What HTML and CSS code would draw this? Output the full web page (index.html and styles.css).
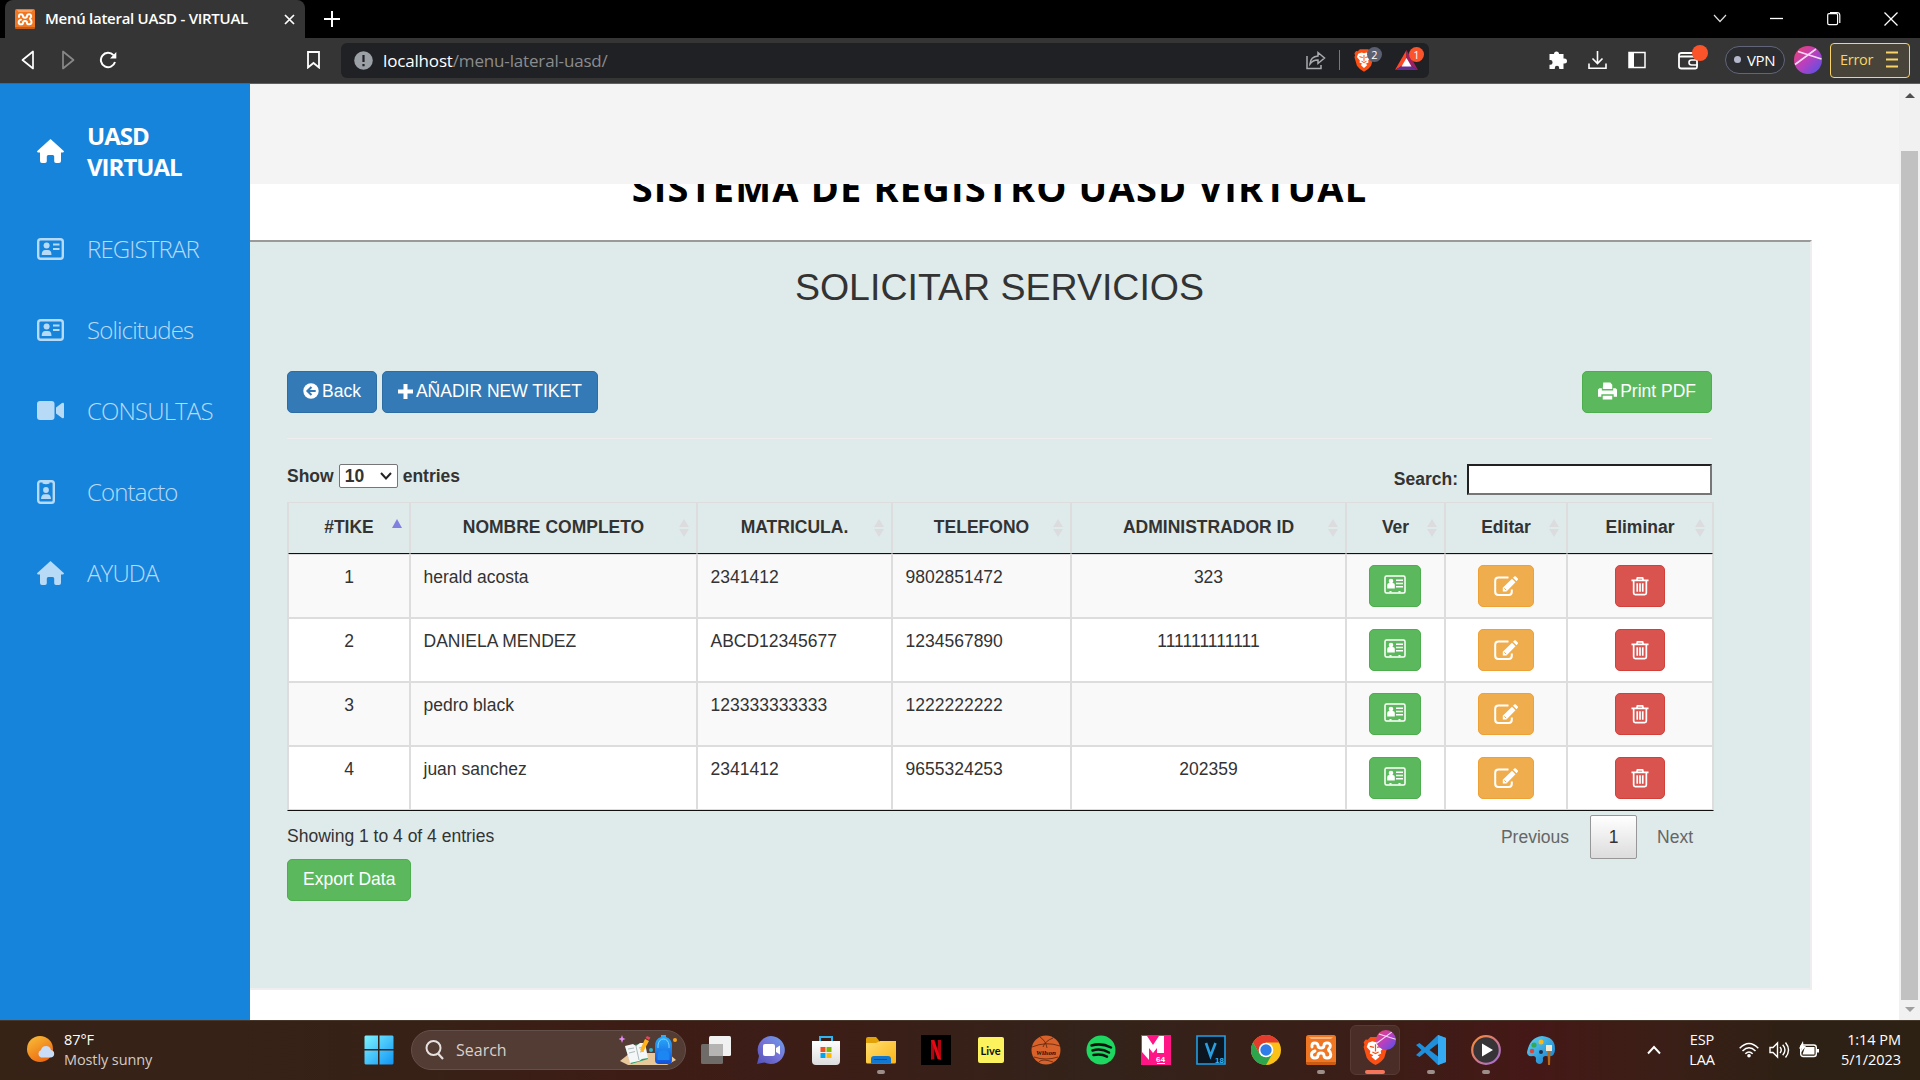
FILE: index.html
```html
<!DOCTYPE html>
<html lang="es">
<head>
<meta charset="utf-8">
<title>Menú lateral UASD - VIRTUAL</title>
<link rel="stylesheet" href="styles.css">
</head>
<body>
<svg class="defs" width="0" height="0">
  <defs>
    <linearGradient id="gSun" x1="0" y1="0" x2=".6" y2="1"><stop offset="0" stop-color="#f8c13a"/><stop offset="1" stop-color="#ee6a10"/></linearGradient>
    <linearGradient id="gWin" x1="0" y1="0" x2="1" y2="1"><stop offset="0" stop-color="#7df3ff"/><stop offset="1" stop-color="#1095f5"/></linearGradient>
    <linearGradient id="gAv" x1="0" y1="0" x2="1" y2="1"><stop offset="0" stop-color="#f0426c"/><stop offset=".5" stop-color="#b83fc0"/><stop offset="1" stop-color="#4a55ea"/></linearGradient>
    <linearGradient id="gChat" x1="1" y1="0" x2="0" y2="1"><stop offset="0" stop-color="#6aa2ec"/><stop offset=".5" stop-color="#7673d6"/><stop offset="1" stop-color="#5350b8"/></linearGradient>
    <linearGradient id="gFold" x1="0" y1="0" x2="1" y2="1"><stop offset="0" stop-color="#ffdf70"/><stop offset="1" stop-color="#fbb416"/></linearGradient>
    <linearGradient id="gBlue" x1="0" y1="0" x2="0" y2="1"><stop offset="0" stop-color="#2ab1ff"/><stop offset="1" stop-color="#1350d8"/></linearGradient>
    <linearGradient id="gRing" x1="0" y1="0" x2="1" y2="1"><stop offset="0" stop-color="#ff8a2a"/><stop offset="1" stop-color="#a06ae0"/></linearGradient>
    <linearGradient id="gPal" x1="0" y1="0" x2="1" y2="1"><stop offset="0" stop-color="#5fd6f4"/><stop offset="1" stop-color="#1579cc"/></linearGradient>
    <linearGradient id="gStore" x1="0" y1="0" x2="0" y2="1"><stop offset="0" stop-color="#fff"/><stop offset="1" stop-color="#dcdcdc"/></linearGradient>
  </defs>
  <symbol id="house" viewBox="0 0 27 24"><path d="M13.5 0 27 12.2Q26.8 13.4 25.6 13.4H24V22q0 2-2 2h-3q-1.8 0-1.8-1.8V17.500q0-1.500-1.500-1.500h-4.400q-1.500 0-1.500 1.500v4.700Q9.800 24 8 24H5q-2 0-2-2V13.400H1.400Q.2 13.400 0 12.200Z"/></symbol>
  <symbol id="card" viewBox="0 0 27 22"><rect x="1.200" y="1.200" width="24.600" height="19.600" rx="2.500" fill="none" stroke="currentColor" stroke-width="2.400"/><circle cx="9.600" cy="7.600" r="3"/><path d="M4.700 17q0-5 3.600-5h2.600q3.600 0 3.600 5z"/><path d="M16 5.500h6.500v2H16zM16 10h6.500v2H16z"/></symbol>
  <symbol id="video" viewBox="0 0 27 19"><rect width="17.500" height="19" rx="3"/><path d="M19 6.500 25 2q2-.8 2 1v13q0 1.800-2 1l-6-4.500z"/></symbol>
  <symbol id="badge" viewBox="0 0 18 24"><rect x="1.200" y="1.200" width="15.600" height="21.600" rx="2.300" fill="none" stroke="currentColor" stroke-width="2.400"/><path d="M5.500 0h7v3.500q-3.500 1.500-7 0z"/><circle cx="9" cy="10" r="2.900"/><path d="M4 19q.2-4.800 3.700-4.800h2.600q3.500 0 3.700 4.800z"/></symbol>
  <symbol id="contact" viewBox="0 0 22 19"><rect x="1" y="1" width="20" height="17" rx="1.500" fill="none" stroke="currentColor" stroke-width="1.500"/><circle cx="7" cy="6" r="2.300"/><path d="M3.200 13.500V10q0-2 2-2h3.600q2 0 2 2v3.500z"/><path d="M12 4.500h7v1.500h-7zM12 7.700h7v1.500h-7zM12 10.900h7v1.500h-7zM5.500 16h2v1.500h-2zM14.500 16h2v1.500h-2z"/></symbol>
  <symbol id="pencil" viewBox="0 0 24 21"><path d="M14.500 1.500H4.500q-3.300 0-3.300 3.300v11q0 3.300 3.300 3.300h10q3.300 0 3.300-3.300v-2.300" fill="none" stroke="currentColor" stroke-width="2"/><path d="m18 2.800 3.500 3.500-9 9.200H8.800v-3.700zM19 1.800 20.300.6q.8-.8 1.600 0l1.700 1.700q.8.800 0 1.600L22.500 5.300z"/><path d="m10.300 12.300 1.900 1.900" stroke="#f0ad4e"/></symbol>
  <symbol id="trash" viewBox="0 0 19 20"><path d="M.5 4h18M6 4l.8-2.600h5.400L13 4M2.800 4.500v12.800q0 1.700 1.700 1.700h10q1.700 0 1.700-1.700V4.500M6.600 7v9M9.500 7v9M12.400 7v9" fill="none" stroke="currentColor" stroke-width="1.800"/></symbol>
  <symbol id="brave" viewBox="0 0 24 28"><path d="M7 1h10l2.500 2.500 2-.2L23.500 6l-.8 2.500.8 2-3 10.500Q18 25 12 28 6 25 3.500 21L.5 10.500l.8-2L.5 6l2-2.700 2 .2z" fill="#fb4f14"/><path d="m12 6 3-1 4 1.500 1.500 4-3.500 4 .5 2.500-3.500 1.500 2 1.500-4 3.500L8 20l2-1.500L6.500 17l.5-2.500-3.500-4L5 6.500 9 5z" fill="#fff"/><path d="m6.500 10 4 1M17.500 10l-4 1M12 8v7M9 15.500l3 1.500 3-1.500" stroke="#fb4f14" stroke-width="1.200" fill="none"/></symbol>
  <symbol id="xampp" viewBox="0 0 30 30"><rect width="30" height="30" rx="2.500" fill="#ef7622"/><path d="M3 2h24l-2 2H5z" fill="#ffb27a"/><path d="M0 27v.5Q0 30 2.500 30h25q2.500 0 2.500-2.500V27z" fill="#c95c12"/><path d="M6 12V10.500Q6 8 8.800 8T12 10.500Q12 13 15 13t3-2.500Q18 8 21.200 8T24.300 11q0 1.500-1.300 2.500-1 1-.2 2 2 1.300 2 4 0 3.500-3.600 3.500-3.200 0-3.200-2.500 0-2.500-3-2.500t-3 2.500q0 2.500-3.200 2.500-3.300 0-3.300-3.300 0-2.700 3.500-3.700" fill="none" stroke="#fff" stroke-width="2.900" stroke-linecap="round" stroke-linejoin="round"/></symbol>
  <symbol id="avatar" viewBox="0 0 28 28"><circle cx="14" cy="14" r="14" fill="url(#gAv)"/><path d="M1 18.500 22 3M4 5.500 27.500 13" stroke="#f6d9f5" stroke-width="1.600"/></symbol>
</svg>

<header class="tabbar">
  <div class="tab">
    <svg class="favicon" width="20" height="20"><use href="#xampp"/></svg>
    <span class="tab-title">Menú lateral UASD - VIRTUAL</span>
    <svg class="tab-close" width="11" height="11" viewBox="0 0 11 11"><path d="m1 1 9 9M10 1l-9 9" stroke="#fff" stroke-width="1.700"/></svg>
  </div>
  <svg class="new-tab" width="16" height="16" viewBox="0 0 16 16"><path d="M8 0v16M0 8h16" stroke="#fff" stroke-width="2"/></svg>
  <div class="window-buttons">
    <svg width="14" height="38"><path d="m1 15 6 6.500 6-6.500" fill="none" stroke="#ddd" stroke-width="1.200"/></svg>
    <svg width="14" height="38"><path d="M0 18.500h13" stroke="#fff" stroke-width="1.300"/></svg>
    <svg width="14" height="38"><path d="M.7 15q0-1.300 1.300-1.300h7.300q1.300 0 1.300 1.300v8.300q0 1.300-1.300 1.300H2q-1.300 0-1.300-1.300zM3 12.500h7q2.800 0 2.800 2.800V23" fill="none" stroke="#fff" stroke-width="1.200"/></svg>
    <svg width="14" height="38"><path d="m.5 12.500 13 13M13.500 12.500l-13 13" stroke="#fff" stroke-width="1.300"/></svg>
  </div>
</header>

<nav class="toolbar">
  <div class="nav-icons">
    <svg width="14" height="20" viewBox="0 0 14 20"><path d="M12 1.500v17L1.500 10z" fill="none" stroke="#fff" stroke-width="1.700" stroke-linejoin="round"/></svg>
    <svg width="14" height="20" viewBox="0 0 14 20"><path d="M2 1.500v17L12.500 10z" fill="none" stroke="#888" stroke-width="1.700" stroke-linejoin="round"/></svg>
    <svg width="18" height="18" viewBox="0 0 18 18"><path d="M14.500 4.200A7.200 7.200 0 1 0 16 11" fill="none" stroke="#fff" stroke-width="2"/><path d="M17.300 1v6.500H11z" fill="#fff"/></svg>
  </div>
  <svg class="bookmark" width="13" height="18" viewBox="0 0 13 18"><path d="M1 1h11v15.500L6.500 12 1 16.500z" fill="none" stroke="#fff" stroke-width="1.800"/></svg>
  <div class="urlbar">
    <svg width="19" height="19" viewBox="0 0 19 19"><circle cx="9.500" cy="9.500" r="9.300" fill="#9aa0a6"/><path d="M9.500 4v7M9.500 13v2.300" stroke="#202124" stroke-width="2.200"/></svg>
    <span class="url"><b>localhost</b>/menu-lateral-uasd/</span>
    <div class="url-actions">
      <svg width="20" height="20" viewBox="0 0 20 20"><path d="M1 6v12.500h14V15M4 14q.5-7.500 8-8V2.500L18.500 8 12 13.500V10q-5-.2-8 4z" fill="none" stroke="#a9abae" stroke-width="1.500"/></svg>
      <i class="divider"></i>
      <span class="with-badge"><svg width="20" height="24"><use href="#brave"/></svg><em class="count gray">2</em></span>
      <span class="with-badge"><svg width="23" height="20" viewBox="0 0 23 20"><path d="M11.500 0 0 20l11.500-7z" fill="#ff4724"/><path d="M11.500 0 23 20l-11.500-7z" fill="#9e1f63"/><path d="M0 20h23l-11.500-7z" fill="#662d91"/><path d="m11.500 8 5 8.500h-10z" fill="#fff"/></svg><em class="count">1</em></span>
    </div>
  </div>
  <div class="extensions">
    <svg width="20" height="20" viewBox="0 0 20 20"><path fill="#fff" d="M6 4a2.500 2.500 0 0 1 5 0h4.500v4.500h1a2.500 2.500 0 0 1 0 5h-1V19h-4.300v-1a2.200 2.200 0 0 0-4.400 0v1H1.500v-4.300h.8a2.300 2.300 0 0 0 0-4.600h-.8V4z"/></svg>
    <svg class="dl" width="19" height="20" viewBox="0 0 19 20"><path d="M9.500 1v12M4.500 8.500l5 5 5-5M1 13.500v4.800h17v-4.800" fill="none" stroke="#fff" stroke-width="1.600"/></svg>
    <svg class="side" width="18" height="18" viewBox="0 0 18 18"><rect x="1" y="1.500" width="16" height="15" fill="none" stroke="#fff" stroke-width="1.500"/><path d="M1 1.500h5v15H1z" fill="#fff"/></svg>
    <span class="with-badge wallet"><svg width="21" height="20" viewBox="0 0 21 20"><path d="M17 6.500V3H3.500Q1 3 1 5t2.500 1.500H19V17q0 1.500-1.500 1.500h-14Q1 18.500 1 16.500V5" fill="none" stroke="#fff" stroke-width="1.800"/><path d="M20 10h-6.500a2.500 2.500 0 0 0 0 5H20" fill="none" stroke="#fff" stroke-width="1.600"/></svg><em class="dot"></em></span>
    <span class="vpn"><i></i>VPN</span>
    <svg class="profile" width="28" height="28"><use href="#avatar"/></svg>
    <span class="error">Error<svg width="12" height="17" viewBox="0 0 12 17"><path d="M0 1.500h12M0 8.500h12M0 15.500h12" stroke="#f9d367" stroke-width="1.800"/></svg></span>
  </div>
</nav>

<div class="viewport">
  <aside class="sidebar">
    <a class="item brand"><svg width="27" height="24"><use href="#house"/></svg><span>UASD VIRTUAL</span></a>
    <a class="item"><svg width="27" height="22"><use href="#card"/></svg><span>REGISTRAR</span></a>
    <a class="item"><svg width="27" height="22"><use href="#card"/></svg><span>Solicitudes</span></a>
    <a class="item"><svg width="27" height="19"><use href="#video"/></svg><span>CONSULTAS</span></a>
    <a class="item slim"><svg width="18" height="24"><use href="#badge"/></svg><span>Contacto</span></a>
    <a class="item"><svg width="27" height="24"><use href="#house"/></svg><span>AYUDA</span></a>
  </aside>
  <main class="main">
    <div class="topband"></div>
    <div class="headline"><h1>SISTEMA DE REGISTRO UASD VIRTUAL</h1></div>
    <section class="panel">
      <h2>SOLICITAR SERVICIOS</h2>
      <div class="actions">
        <a class="btn primary"><svg width="16" height="16" viewBox="0 0 17 17"><circle cx="8.500" cy="8.500" r="8.200" fill="#fff"/><path d="M13.500 8.500H5M9 4.200 4.700 8.500 9 12.800" fill="none" stroke="#337ab7" stroke-width="2.200"/></svg>Back</a>
        <a class="btn primary"><svg width="15" height="15" viewBox="0 0 15 15"><path d="M7.500 0v15M0 7.500h15" stroke="#fff" stroke-width="4"/></svg>AÑADIR NEW TIKET</a>
        <a class="btn success print"><svg width="19" height="18" viewBox="0 0 20 18"><path fill="#fff" d="M5.500 0h7.500L15 2.500V7H5zM0 7.500 1.500 6H4v2.500h12V6h2.500L20 7.500V15h-3.500v-2.500h-13V15H0zM5 14h10v4H5z"/></svg>Print PDF</a>
      </div>
      <hr>
      <div class="controls">
        <label>Show <span class="select">10<svg width="12" height="8" viewBox="0 0 12 8"><path d="m1 1 5 5.500L11 1" fill="none" stroke="#222" stroke-width="2"/></svg></span> entries</label>
        <label class="search">Search:<input type="text"></label>
      </div>
      <table>
        <colgroup><col class="c1"><col class="c2"><col class="c3"><col class="c4"><col class="c5"><col class="c6"><col class="c7"><col class="c8"></colgroup>
        <thead><tr><th class="sorted">#TIKE</th><th>NOMBRE COMPLETO</th><th>MATRICULA.</th><th>TELEFONO</th><th>ADMINISTRADOR ID</th><th>Ver</th><th>Editar</th><th>Eliminar</th></tr></thead>
        <tbody>
          <tr><td class="c">1</td><td>herald acosta</td><td>2341412</td><td>9802851472</td><td class="c">323</td><td class="c"><a class="btn success ver"><svg width="22" height="19"><use href="#contact"/></svg></a></td><td class="c"><a class="btn warning"><svg width="24" height="21"><use href="#pencil"/></svg></a></td><td class="c"><a class="btn danger"><svg width="18" height="20"><use href="#trash"/></svg></a></td></tr>
          <tr><td class="c">2</td><td>DANIELA MENDEZ</td><td>ABCD12345677</td><td>1234567890</td><td class="c">111111111111</td><td class="c"><a class="btn success ver"><svg width="22" height="19"><use href="#contact"/></svg></a></td><td class="c"><a class="btn warning"><svg width="24" height="21"><use href="#pencil"/></svg></a></td><td class="c"><a class="btn danger"><svg width="18" height="20"><use href="#trash"/></svg></a></td></tr>
          <tr><td class="c">3</td><td>pedro black</td><td>123333333333</td><td>1222222222</td><td class="c"></td><td class="c"><a class="btn success ver"><svg width="22" height="19"><use href="#contact"/></svg></a></td><td class="c"><a class="btn warning"><svg width="24" height="21"><use href="#pencil"/></svg></a></td><td class="c"><a class="btn danger"><svg width="18" height="20"><use href="#trash"/></svg></a></td></tr>
          <tr><td class="c">4</td><td>juan sanchez</td><td>2341412</td><td>9655324253</td><td class="c">202359</td><td class="c"><a class="btn success ver"><svg width="22" height="19"><use href="#contact"/></svg></a></td><td class="c"><a class="btn warning"><svg width="24" height="21"><use href="#pencil"/></svg></a></td><td class="c"><a class="btn danger"><svg width="18" height="20"><use href="#trash"/></svg></a></td></tr>
        </tbody>
      </table>
      <div class="footer">
        <div class="info"><p>Showing 1 to 4 of 4 entries</p><a class="btn success">Export Data</a></div>
        <div class="pager"><span>Previous</span><b>1</b><span>Next</span></div>
      </div>
    </section>
  </main>
  <div class="scrollbar"><i class="up"></i><div class="thumb"></div><i class="down"></i></div>
</div>

<footer class="taskbar">
  <div class="weather">
    <svg width="30" height="28" viewBox="0 0 30 28"><circle cx="13" cy="13" r="13" fill="url(#gSun)"/><path d="M14 21.500a4 4 0 0 1 0-7.500q1-4 5-4t5 4a3.800 3.800 0 0 1 0 7.500z" fill="#c9dcf8"/></svg>
    <div><p>87°F</p><p class="dim">Mostly sunny</p></div>
  </div>
  <svg class="start" width="30" height="30" viewBox="0 0 30 30"><path d="M1.500.5H14V14H.5V1.500zM15.500.5h13l1 1V14h-14zM.5 15.500H14v14H1.500l-1-1zM15.500 15.500h14v13l-1 1h-13z" fill="url(#gWin)"/></svg>
  <div class="searchbox">
    <svg width="19" height="20" viewBox="0 0 19 20"><circle cx="8.500" cy="8" r="7" fill="none" stroke="#e6e0de" stroke-width="2"/><path d="m13 13.500 5 5.500" stroke="#e6e0de" stroke-width="2.200"/></svg>
    <span>Search</span>
    <svg class="art" width="60" height="34" viewBox="0 0 60 34"><path d="m1 28 10-8h38l8 7-9 5H9z" fill="#e8c79a"/><path d="m6 14 18-4 5 16-17 5z" fill="#2f9e6a"/><path d="m6 13 8-2 3 2 4-3 5 0 3 15-6 1-3 2-9 2z" fill="#f4f6f8"/><path d="m17 13 3 14M9 16l6-1M10 20l6-1.500M20 15l4-1M21 19l4-1" stroke="#9aa" stroke-width=".8"/><path d="m21 17 5-11 4 2-6 11z" fill="#ffb21a"/><path d="m26.500 5 1.500-2 3.500 1.500L30 7z" fill="#f0405a"/><path d="M36 13q0-7 6-9V2h5v2q6 2 6 9v14q0 4-4 4h-9q-4 0-4-4z" fill="url(#gBlue)"/><path d="M38.500 27v-4q0-6 6-6t6 6v4z" fill="#1c86f2"/><path d="M39 15V12q1-6 5.500-6T50 12v3" stroke="#7cd4ff" fill="none"/><path d="m3 2 1 3L6.500 6 4 7 3 10 2 7-.500 6 2 5z" fill="#e58af5"/><circle cx="32" cy="17" r="2" fill="#35b5c8"/><circle cx="56" cy="7" r="2" fill="#f6a51a"/></svg>
  </div>
  <div class="apps">
    <span class="app"><svg width="30" height="30" viewBox="0 0 30 30"><rect x="0" y="9" width="22" height="20" rx="1.500" fill="#6f6b69"/><rect x="8" y="1" width="22" height="20" rx="1.500" fill="#f1f1f1"/><path d="M8 9h14v12H8z" fill="#b6b4b3"/></svg></span>
    <span class="app"><svg width="30" height="30" viewBox="0 0 30 30"><path d="M15 1a14 14 0 1 1-6.500 26.500L1 29l2-8A14 14 0 0 1 15 1z" fill="url(#gChat)"/><rect x="7" y="9" width="12" height="12" rx="2" fill="#fff"/><path d="m20 13 4-2.500v9L20 17z" fill="#fff"/></svg></span>
    <span class="app"><svg width="30" height="30" viewBox="0 0 30 30"><path d="M9 7V2h12v5" fill="none" stroke="#2fb4f0" stroke-width="2"/><path d="M1 6h28v20q0 4-4 4H5q-4 0-4-4z" fill="url(#gStore)"/><path d="M9.500 12h5v5h-5z" fill="#f25022"/><path d="M15.500 12h5v5h-5z" fill="#7fba00"/><path d="M9.500 18h5v5h-5z" fill="#00a4ef"/><path d="M15.500 18h5v5h-5z" fill="#ffb900"/></svg></span>
    <span class="app on"><svg width="30" height="30" viewBox="0 0 30 30"><path d="M0 4q0-2 2-2h8l3 3.500V12H0z" fill="#e0a208"/><path d="M0 8h10l4-2h16v21q0 1.500-1.500 1.500h-27Q0 28.500 0 27z" fill="url(#gFold)"/><path d="M5 28.500V24q0-3 3-3h14q3 0 3 3v4.500z" fill="#1277cf"/><path d="M8 24.500h13" stroke="#0a4c92"/></svg></span>
    <span class="app"><svg width="30" height="30" viewBox="0 0 30 30"><path d="M0 0h30v30H0z" fill="#000"/><path d="M10 5h3.300v19l-3.300.7zM16.700 5H20v19.700l-3.300-.7z" fill="#b1060f"/><path d="M10 5h3.300L20 24.700l-3.300-.7z" fill="#e50914"/></svg></span>
    <span class="app"><span class="live">Live</span></span>
    <span class="app"><svg width="30" height="30" viewBox="0 0 30 30"><circle cx="15" cy="15" r="14.500" fill="#d8622a"/><path d="M1 12q14-6 28-1M3 22q12 4 24 0M9 2q6 4 7 11M22 3q-8 3-10 9M8 27q3-4 14 0" fill="none" stroke="#5a230e" stroke-width=".8"/><text x="15" y="20" text-anchor="middle" class="wilson">Wilson</text></svg></span>
    <span class="app"><svg width="30" height="30" viewBox="0 0 30 30"><circle cx="15" cy="15" r="14.500" fill="#1ed760"/><path d="M5.500 10.500q10-3 19.500 2M6.500 15.500q9-2.500 16.500 2M7.500 20q7.500-1.800 13.500 1.700" fill="none" stroke="#111" stroke-width="2.500" stroke-linecap="round"/></svg></span>
    <span class="app"><svg width="30" height="30" viewBox="0 0 30 30"><path d="M0 0h30v30H0z" fill="#ff1585"/><path d="M1 1h5l6 9 6-9h5v17h-7v-5l-4 5-4-5v12L1 17z" fill="#fff"/><text x="19.500" y="26.500" class="m64">64</text><path d="M16 28.500h8" stroke="#fff"/></svg></span>
    <span class="app"><svg width="30" height="30" viewBox="0 0 30 30"><path d="M1 1h28v28H1z" fill="#0b1620" stroke="#1f9fe8" stroke-width="1.600"/><path d="m10 8 4.500 13L19.500 8" fill="none" stroke="#2a9fe0" stroke-width="2.600"/><text x="19" y="27.500" class="v18">18</text></svg></span>
    <span class="app"><svg width="30" height="30" viewBox="0 0 30 30"><circle cx="15" cy="15" r="15" fill="#fbc116"/><path d="M15 15 8.500 18.700 2 7.500A15 15 0 0 1 28 7.500H15z" fill="#e33b2e"/><path d="M2 7.500A15 15 0 0 0 15 30l6.500-11.300L15 22l-6.500-3.300z" fill="#2da44e"/><circle cx="15" cy="15" r="7.300" fill="#fff"/><circle cx="15" cy="15" r="5.700" fill="#2f7de9"/></svg></span>
    <span class="app on"><svg width="30" height="30"><use href="#xampp"/></svg></span>
    <span class="app active"><svg width="25" height="29"><use href="#brave"/></svg><svg class="mini" width="20" height="20"><use href="#avatar"/></svg></span>
    <span class="app on"><svg width="30" height="30" viewBox="0 0 30 30"><path d="m22 0 8 3v24l-8 3L9 17.500 3.500 22 0 20l5.500-5L0 10l3.500-2L9 12.500zM22 8.500 13.500 15l8.500 6.500z" fill="#1f8fdc"/><path d="m22 0 8 3v24l-8 3z" fill="#35a9f2"/></svg></span>
    <span class="app on"><svg width="30" height="30" viewBox="0 0 30 30"><circle cx="15" cy="15" r="13.800" fill="#363436" stroke="url(#gRing)" stroke-width="2.200"/><path d="m11 8.500 11 6.500-11 6.500z" fill="#fff"/></svg></span>
    <span class="app"><svg width="30" height="30" viewBox="0 0 30 30"><path d="M16 1q13 1 13 13 0 9-9 7-4 0-3 4 0 4-4 4-4-1-3-5 0-3-3-3-6 1-6-4Q4 2 16 1z" fill="url(#gPal)"/><circle cx="8" cy="10" r="2.600" fill="#35a853"/><circle cx="15" cy="7" r="2.500" fill="#f8b81e"/><circle cx="6" cy="16" r="2.300" fill="#d9483b"/><circle cx="15" cy="17" r="2" fill="#20304a"/><path d="M20 10h6v6h-6z" fill="#f3e6d0"/><path d="M21.500 16h3l-.5 14h-2z" fill="#b56a18"/></svg></span>
  </div>
  <div class="tray">
    <svg class="chev" width="14" height="10" viewBox="0 0 14 10"><path d="M1 8.500 7 2l6 6.500" fill="none" stroke="#fff" stroke-width="1.900"/></svg>
    <div class="lang"><p>ESP</p><p>LAA</p></div>
    <svg class="wifi" width="20" height="16" viewBox="0 0 20 16"><path d="M.7 6.200q9.300-9.500 18.600 0M3.500 9q6.500-6.500 13 0M6.300 11.700q3.700-3.500 7.400 0" fill="none" stroke="#fff" stroke-width="1.500"/><circle cx="10" cy="13.700" r="1.800" fill="#fff"/></svg>
    <svg class="vol" width="21" height="18" viewBox="0 0 21 18"><path d="M1 6.500h3L8.500 2v14L4 11.500H1zM11 6q2.500 3 0 6M13.700 3.800q4.500 5.200 0 10.400M16.500 1.500q6 7.500 0 15" fill="none" stroke="#fff" stroke-width="1.400"/></svg>
    <svg class="bat" width="20" height="18" viewBox="0 0 20 18"><rect x="1.700" y="4" width="15.600" height="11.500" rx="2.500" fill="none" stroke="#fff" stroke-width="1.400"/><path d="M6 6h9.500v7.500h-12zM18 8h2v3.500h-2zM4 0 0 7.500h2.500L1.500 12 7 5H4.500z" fill="#fff"/></svg>
    <div class="clock"><p>1:14 PM</p><p>5/1/2023</p></div>
  </div>
</footer>
</body>
</html>
```

FILE: styles.css
```css
* { box-sizing: border-box; }
body { margin: 0; width: 1920px; height: 1080px; overflow: hidden; font-family: "Open Sans", "Noto Sans", sans-serif; background: #fff; }
p, h1, h2 { margin: 0; }
svg { display: block; flex: none; fill: currentColor; }
.defs { position: absolute; }

/* browser chrome */
.tabbar { height: 38px; background: #000; display: flex; align-items: center; color: #fff; padding-left: 5px; }
.tab { width: 300px; height: 38px; background: #353535; border-radius: 8px 8px 0 0; display: flex; align-items: center; padding: 0 10px; }
.tab-title { margin-left: 10px; width: 229px; padding-bottom: 2px; font-size: 15px; font-weight: 600; letter-spacing: -.27px; white-space: nowrap; }
.tab-close { margin-left: 10px; }
.new-tab { margin-left: 19px; }
.window-buttons { display: flex; gap: 43px; margin-left: auto; padding-right: 22px; }
.toolbar { height: 46px; background: #353535; border-bottom: 1px solid #606060; display: flex; align-items: center; padding: 0 10px 1px 0; color: #fff; }
.nav-icons { display: flex; align-items: center; gap: 26px; padding-left: 21px; width: 307px; }
.nav-icons svg:last-child { margin-left: -2px; }
.bookmark { margin-right: 21px; }
.urlbar { width: 1088px; height: 35px; border-radius: 6px; background: #202124; display: flex; align-items: center; padding: 0 11px 0 13px; }
.url { margin-left: 10px; font-size: 17px; color: #8b8c8e; letter-spacing: -.16px; }
.url b { color: #fff; font-weight: 400; }
.url-actions { display: flex; align-items: center; margin-left: auto; }
.divider { width: 1px; height: 20px; background: #77787a; margin: 0 14px 0 13px; }
.with-badge { position: relative; display: block; }
.with-badge + .with-badge { margin-left: 21px; }
.count { position: absolute; left: 13px; top: -1px; width: 15px; height: 15px; border-radius: 8px; background: #5b5f72; font: 11px/15px "Open Sans", sans-serif; text-align: center; color: #fff; }
.with-badge + .with-badge .count { left: 14px; background: #fb542b; top: -3px; }
.extensions { display: flex; align-items: center; margin-left: auto; }
.dl { margin-left: 20px; }
.side { margin-left: 21px; }
.wallet { margin-left: 32px; }
.dot { position: absolute; left: 14px; top: -5px; width: 16px; height: 16px; border-radius: 50%; background: #fb542b; }
.vpn { margin-left: 26px; width: 60px; height: 28px; border: 1px solid #62657a; border-radius: 14px; display: flex; align-items: center; font-size: 15px; padding: 0 0 1px 8px; letter-spacing: -.4px; background: #2c2d31; }
.vpn i { width: 7px; height: 7px; border-radius: 50%; background: #b5b8cc; margin-right: 6px; }
.profile { margin-left: 9px; }
.error { margin-left: 8px; width: 80px; height: 35px; border: 1px solid #f9d367; border-radius: 4px; background: #48443a; color: #f9d367; font-size: 14.5px; letter-spacing: -.3px; display: flex; align-items: center; justify-content: space-between; padding: 0 11px 1px 9px; }

/* page */
.viewport { height: 936px; display: flex; }
.sidebar { width: 250px; background: #1784dc; padding-top: 13px; color: #b7daf6; }
.item { display: flex; align-items: center; height: 81px; padding-left: 37px; font-weight: 300; font-size: 24px; line-height: 31px; letter-spacing: -.85px; }
.item span { margin-left: 23px; width: 120px; }
.item.slim span { margin-left: 32px; }
.brand { height: 111px; padding-bottom: 3px; color: #fff; font-weight: 700; letter-spacing: -1px; }
.main { width: 1649px; background: #fff; }
.topband { height: 100px; background: #f4f4f4; }
.headline { height: 56px; overflow: hidden; display: flex; justify-content: center; padding-right: 150px; }
.headline h1 { margin-top: -28px; font-size: 38px; line-height: 63px; font-weight: 700; letter-spacing: 1.17px; color: #000; white-space: nowrap; }
.panel { width: 1562px; height: 750px; border: 2px solid #eee; border-top-color: #9a9a9a; border-left: 0; background: #dfebeb; padding: 0 98px 0 37px; font-family: "Liberation Sans", Arial, sans-serif; font-size: 17.5px; color: #333; }
.panel h2 { font-size: 37.5px; font-weight: 400; line-height: 43px; padding-top: 24px; text-align: center; }
.actions { display: flex; gap: 5px; margin-top: 62px; }
.btn { height: 42px; display: inline-flex; align-items: center; gap: 3px; padding: 0 15px 2px; border: 1px solid; border-radius: 5px; color: #fff; white-space: nowrap; }
.primary { background: #337ab7; border-color: #2e6da4; }
.success { background: #5cb85c; border-color: #4cae4c; }
.warning { background: #f0ad4e; border-color: #eea236; }
.danger { background: #d9534f; border-color: #d43f3a; }
.print { margin-left: auto; }
hr { border: 0; height: 1px; background: #eee; margin: 25px 0; }
.controls { display: flex; justify-content: space-between; font-weight: 700; height: 38px; }
.controls label { display: flex; align-items: center; height: 24px; gap: 5px; }
.select { width: 59px; height: 24px; background: #fff; border: 1px solid #767676; border-radius: 2px; display: flex; align-items: center; justify-content: space-between; padding: 0 5px; }
.controls .search { height: 31px; gap: 9px; }
.search input { width: 245px; height: 31px; border: 2px solid; border-color: #212121 #767676 #767676 #212121; background: #fff; }
table { width: 1427px; table-layout: fixed; border-collapse: separate; border-spacing: 0; border: 1px solid #ddd; border-bottom-color: #111; }
.c1 { width: 122px; } .c2 { width: 287px; } .c3 { width: 195px; } .c4 { width: 179px; } .c5 { width: 275px; } .c6 { width: 99px; } .c7 { width: 122px; } .c8 { width: 146px; }
th, td { border-left: 1px solid #ddd; border-right: 1px solid #ddd; }
th { height: 51px; padding: 0 0 1px; border-bottom: 1px solid #111; position: relative; }
th::before, th::after { content: ""; position: absolute; right: 7px; border: 5px solid transparent; }
th::before { top: 16px; border-width: 0 5px 8px; border-bottom-color: #dcdcdf; }
th::after { top: 26px; border-width: 8px 5px 0; border-top-color: #dcdcdf; }
th:first-child::before { right: 7px; border-bottom-color: #8080e0; border-width: 0 5.5px 9px; }
th:first-child::after { display: none; }
td { height: 64px; padding: 10px 12.5px 0; vertical-align: top; border-top: 1px solid #ddd; border-bottom: 1px solid #ddd; background: #fff; line-height: 24px; }
tr:nth-child(odd) td { background: #f9f9f9; }
td.c { padding: 10px 0 0; text-align: center; }
td .btn { padding: 0 15px; }
td .ver { padding: 0 14px 3px; margin-right: 1px; }
.footer { display: flex; justify-content: space-between; }
.info p { height: 48px; line-height: 50px; }
.pager { display: flex; height: 44px; margin-top: 4px; line-height: 44px; color: #666; }
.pager b { width: 47px; line-height: 42px; font-weight: 400; text-align: center; color: #333; border: 1px solid #979797; border-radius: 2px; background: linear-gradient(#fff, #dcdcdc); margin: 0 20px 0 21px; }
.pager span:last-child { margin-right: 19px; }
.scrollbar { width: 21px; background: #f1f1f1; display: flex; flex-direction: column; align-items: center; }
.up, .down { border: 5px solid transparent; }
.up { margin-top: 9px; border-width: 0 5px 5px; border-bottom-color: #505050; }
.down { margin-top: 7px; border-width: 5px 5px 0; border-top-color: #a0a0a0; }
.thumb { width: 17px; height: 849px; margin-top: 53px; background: #c1c1c1; }

/* taskbar */
.taskbar { height: 60px; display: flex; align-items: center; padding-bottom: 1px; color: #fff; font-size: 14.5px; line-height: 20px; border-top: 1px solid #47372b; background: linear-gradient(90deg, #362316, #372116 22%, #3e1c16 33%, #3c1d16 42%, #33231a 57%, #3a1e17 70%, #451816 80%, #3a1f17 87%, #2e2014 93%, #2d2114); }
.weather { display: flex; align-items: center; padding-left: 27px; gap: 7px; width: 364px; letter-spacing: -.1px; }
.dim { color: #d3cbc7; }
.searchbox { width: 275px; height: 40px; margin-left: 17px; border-radius: 20px; border: 1px solid #64504a; background: #523c34; display: flex; align-items: center; padding: 0 6px 0 13px; font-size: 16px; color: #d8d0cc; }
.searchbox span { margin-left: 12px; }
.art { margin-left: auto; }
.apps { display: flex; margin-left: 2px; }
.app { width: 55px; height: 50px; display: flex; align-items: center; justify-content: center; position: relative; }
.on::after, .active::after { content: ""; position: absolute; left: 24px; bottom: 1px; width: 8px; height: 4px; border-radius: 2px; background: #9c8e89; }
.active { background: #4a2d27; border: 1px solid #573a34; border-radius: 6px; width: 50px; margin: 0 3px 0 2px; }
.active::after { left: 14px; width: 20px; background: #f5765a; bottom: 0; }
.mini { position: absolute; left: 25px; top: 4px; }
.live { width: 26px; height: 26px; border-radius: 2px; background: #fbf25e; color: #111; font: 700 11px/27px "Lato", sans-serif; text-align: center; }
.wilson { font: italic 700 7px "Liberation Serif", serif; fill: #1e0d06; }
.m64 { font: 700 8px "Liberation Mono", monospace; fill: #fff; text-anchor: middle; }
.v18 { font: 700 8px "Liberation Sans", sans-serif; fill: #38b6f0; }
.tray { display: flex; align-items: center; margin-left: auto; padding-right: 19px; }
.lang { width: 40px; margin-left: 21px; text-align: center; letter-spacing: -.1px; }
.wifi { margin-left: 17px; }
.vol { margin-left: 10px; }
.bat { margin-left: 9px; }
.clock { width: 82px; text-align: right; letter-spacing: -.05px; white-space: nowrap; }
```
